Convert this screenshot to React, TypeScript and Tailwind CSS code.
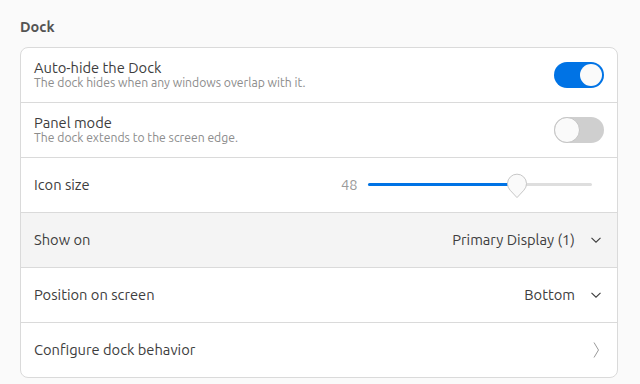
import { ReactNode } from "react";

const Switch = ({ on }: { on: boolean }) =>
  on ? (
    <div className="flex h-[26px] w-[50px] items-center justify-end rounded-full bg-[#0073e5] px-[2px]">
      <div className="h-[22px] w-[22px] rounded-full bg-[#fafafa]" />
    </div>
  ) : (
    <div className="flex h-[26px] w-[50px] items-center rounded-full bg-[#cfcfcf]">
      <div className="h-[26px] w-[26px] rounded-full border border-[#c4c4c4] bg-[#fafafa]" />
    </div>
  );

const ChevronDown = () => (
  <svg width="16" height="16" viewBox="0 0 16 16" fill="none">
    <path d="M3.5 5.8 L8 10.2 L12.5 5.8" stroke="#3d3d3d" strokeWidth="1.1" />
  </svg>
);

const ChevronRight = () => (
  <svg width="16" height="16" viewBox="0 0 16 16" fill="none">
    <path d="M6 0.5 L10.5 8 L6 15.5" stroke="#9a9a9a" strokeWidth="1" />
  </svg>
);

const Row = ({ children, hover }: { children: ReactNode; hover?: boolean }) => (
  <div
    className={`flex h-[55px] items-center justify-between border-b border-[#dadada] px-[13px] last:h-[54px] last:border-b-0 ${
      hover ? "bg-[#f4f4f4]" : ""
    }`}
  >
    {children}
  </div>
);

const Slider = ({ value }: { value: number }) => (
  <div className="flex items-center">
    <span className="w-[27px] text-[14.7px] text-[#9a9a9a]">{value}</span>
    <div className="relative mr-[12px] h-[3px] w-[224px] rounded-full bg-[#dedede]">
      <div className="h-[3px] w-[149px] rounded-full bg-[#0073e5]" />
      <svg
        className="absolute left-[139px] top-[-10px]"
        width="20"
        height="26"
        viewBox="0 0 20 26"
      >
        <path
          d="M10 24.6 L3.1 17.2 A9.5 9.5 0 1 1 16.9 17.2 Z"
          fill="#fafafa"
          stroke="#c6c6c6"
          strokeWidth="1"
        />
      </svg>
    </div>
  </div>
);

export default function App() {
  return (
    <div className="min-h-screen bg-[#fafafa] pt-[17px] font-['Ubuntu','Noto_Sans',sans-serif] text-[#3d3d3d]">
      <div className="ml-5 mr-[22px]">
        <h2 className="text-[14.5px] font-bold leading-[20px] text-[#545454]">Dock</h2>
        <div className="mt-[10px] overflow-hidden rounded-[8px] border border-[#dadada] bg-white">
          <Row>
            <div className="flex flex-col">
              <span className="text-[14.7px] leading-[16px]">Auto-hide the Dock</span>
              <span className="text-[12.2px] leading-[14px] text-[#8c8c8c]">
                The dock hides when any windows overlap with it.
              </span>
            </div>
            <Switch on />
          </Row>
          <Row>
            <div className="flex flex-col">
              <span className="text-[14.7px] leading-[16px]">Panel mode</span>
              <span className="text-[12.2px] leading-[14px] text-[#8c8c8c]">
                The dock extends to the screen edge.
              </span>
            </div>
            <Switch on={false} />
          </Row>
          <Row>
            <span className="text-[14.7px]">Icon size</span>
            <Slider value={48} />
          </Row>
          <Row hover>
            <span className="text-[14.7px]">Show on</span>
            <div className="flex items-center gap-[13px]">
              <span className="text-[14.7px]">Primary Display (1)</span>
              <ChevronDown />
            </div>
          </Row>
          <Row>
            <span className="text-[14.7px]">Position on screen</span>
            <div className="flex items-center gap-[13px]">
              <span className="text-[14.7px]">Bottom</span>
              <ChevronDown />
            </div>
          </Row>
          <Row>
            <span className="text-[14.7px]">Configure dock behavior</span>
            <ChevronRight />
          </Row>
        </div>
      </div>
    </div>
  );
}
